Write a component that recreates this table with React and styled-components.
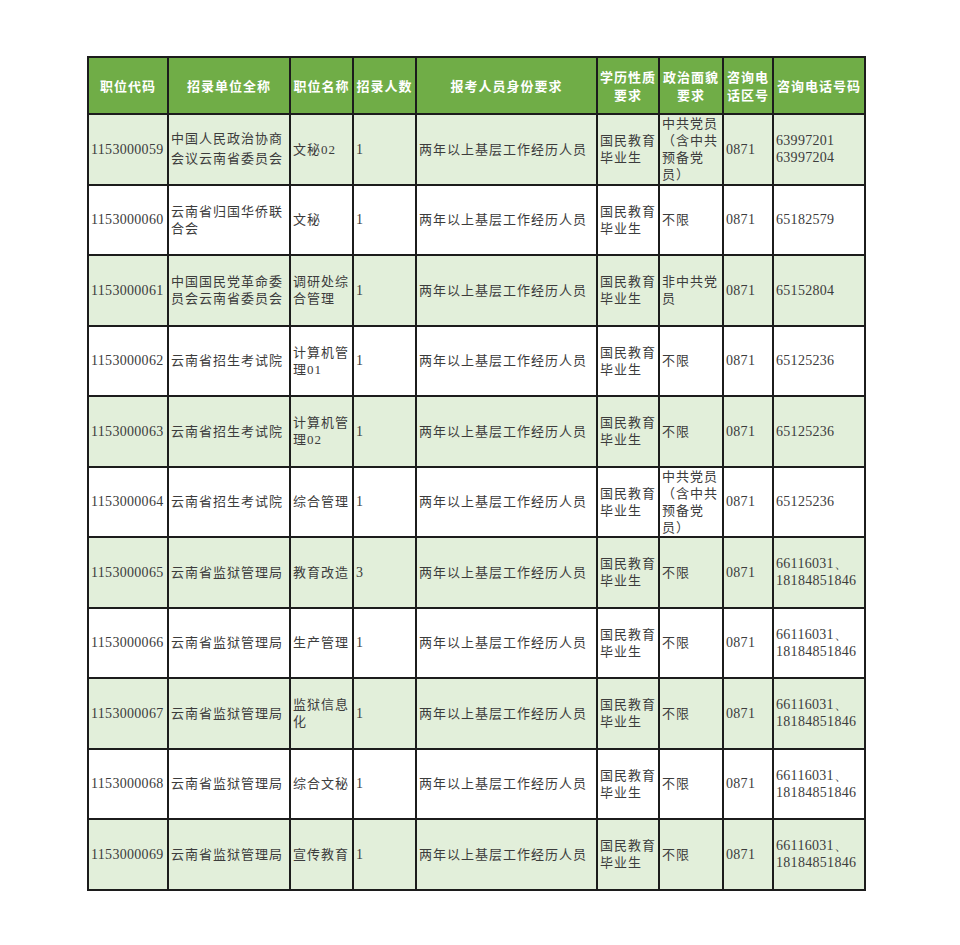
import React from "react";
import styled, { createGlobalStyle } from "styled-components";

const GlobalStyle = createGlobalStyle`
  html, body {
    margin: 0;
    padding: 0;
    background: #ffffff;
  }
`;

const Page = styled.div`
  padding: 56px 0 40px 87px;
  font-family: "Liberation Serif", "Noto Sans CJK SC", serif;
`;

const Table = styled.table`
  border-collapse: collapse;
  table-layout: fixed;
  width: 777px;
  border: 2px solid #1c1c1c;
`;

const HeadRow = styled.tr`
  height: 57px;
  background: #70ad47;
`;

const Row = styled.tr`
  height: 70.5px;
  background: ${({ $shaded }) => ($shaded ? "#e2efda" : "#ffffff")};
`;

const Th = styled.th`
  border: 2px solid #1c1c1c;
  padding: 0;
  color: #ffffff;
  font-family: "Noto Sans CJK SC", sans-serif;
  font-weight: 700;
  font-size: 13px;
  letter-spacing: 1px;
  line-height: 18px;
  text-align: center;
  vertical-align: middle;
`;

const Td = styled.td`
  border: 2px solid #1c1c1c;
  padding: 0 0 0 2px;
  color: #3c3c3c;
  font-size: 13px;
  letter-spacing: 1px;
  line-height: ${({ $loose }) => ($loose ? "20px" : "17px")};
  text-align: left;
  vertical-align: middle;
`;

const Num = styled.span`
  font-family: "Liberation Serif", serif;
  font-size: 14px;
  letter-spacing: 0.3px;
`;

const widths = [80, 122, 63, 63, 181, 62, 64, 50, 92];

const headers = [
  "职位代码",
  "招录单位全称",
  "职位名称",
  "招录人数",
  "报考人员身份要求",
  "学历性质要求",
  "政治面貌要求",
  "咨询电话区号",
  "咨询电话号码",
];

const req = "两年以上基层工作经历人员";
const edu = "国民教育毕业生";
const party = "中共党员（含中共预备党员）";
const prison = "66116031、18184851846";

const rows = [
  ["1153000059", "中国人民政治协商会议云南省委员会", "文秘02", "1", party, "63997201 63997204"],
  ["1153000060", "云南省归国华侨联合会", "文秘", "1", "不限", "65182579"],
  ["1153000061", "中国国民党革命委员会云南省委员会", "调研处综合管理", "1", "非中共党员", "65152804"],
  ["1153000062", "云南省招生考试院", "计算机管理01", "1", "不限", "65125236"],
  ["1153000063", "云南省招生考试院", "计算机管理02", "1", "不限", "65125236"],
  ["1153000064", "云南省招生考试院", "综合管理", "1", party, "65125236"],
  ["1153000065", "云南省监狱管理局", "教育改造", "3", "不限", prison],
  ["1153000066", "云南省监狱管理局", "生产管理", "1", "不限", prison],
  ["1153000067", "云南省监狱管理局", "监狱信息化", "1", "不限", prison],
  ["1153000068", "云南省监狱管理局", "综合文秘", "1", "不限", prison],
  ["1153000069", "云南省监狱管理局", "宣传教育", "1", "不限", prison],
];

export default function App() {
  return (
    <>
      <GlobalStyle />
      <Page>
        <Table>
          <colgroup>
            {widths.map((w, i) => (
              <col key={i} style={{ width: w }} />
            ))}
          </colgroup>
          <thead>
            <HeadRow>
              {headers.map((h) => (
                <Th key={h}>{h}</Th>
              ))}
            </HeadRow>
          </thead>
          <tbody>
            {rows.map(([code, unit, post, count, politics, phone], i) => (
              <Row key={code} $shaded={i % 2 === 0}>
                <Td>
                  <Num>{code}</Num>
                </Td>
                <Td $loose={i === 0}>{unit}</Td>
                <Td>{post}</Td>
                <Td>
                  <Num>{count}</Num>
                </Td>
                <Td>{req}</Td>
                <Td>{edu}</Td>
                <Td>{politics}</Td>
                <Td>
                  <Num>0871</Num>
                </Td>
                <Td>
                  <Num>{phone}</Num>
                </Td>
              </Row>
            ))}
          </tbody>
        </Table>
      </Page>
    </>
  );
}
